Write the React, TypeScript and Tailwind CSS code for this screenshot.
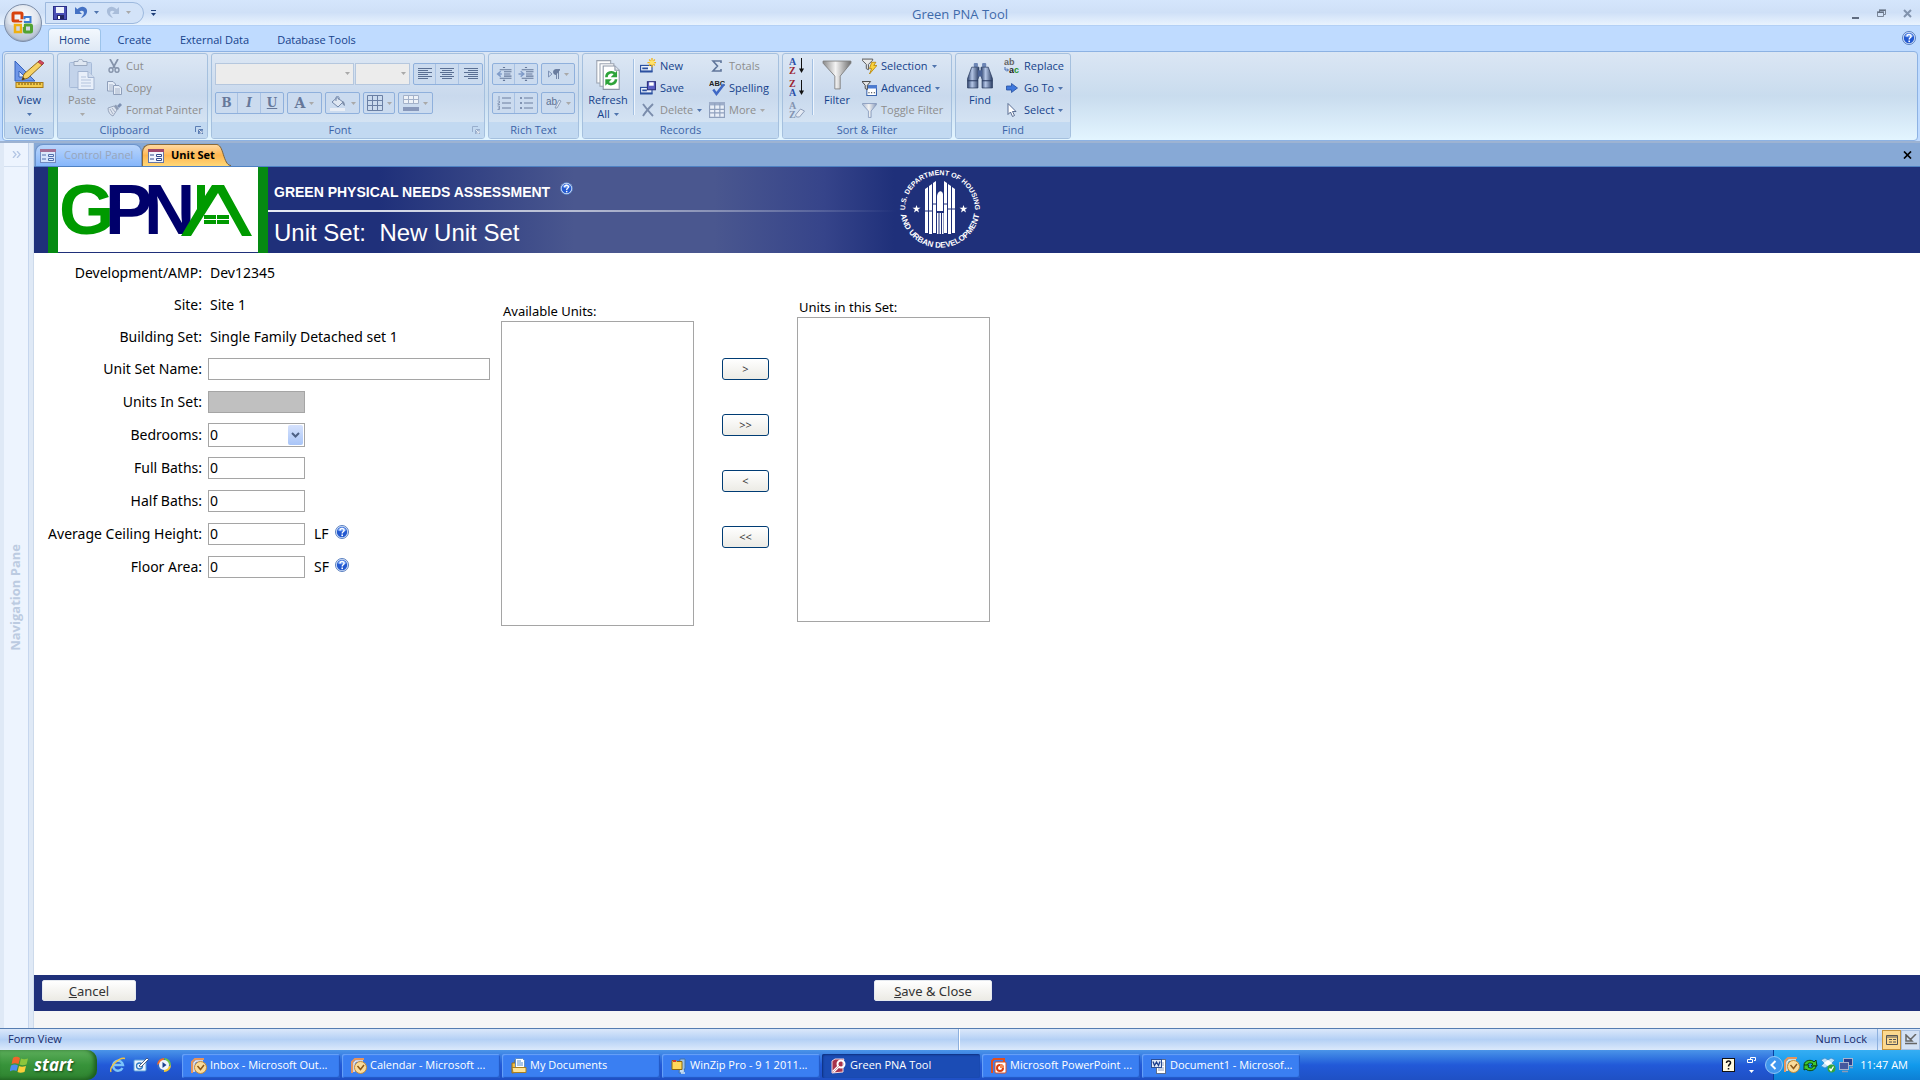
import React from "react";
import clsx from "clsx";

type IconProps = { w?: number; h?: number; box?: string; children: React.ReactNode; className?: string };

const Icon: React.FC<IconProps> = ({ w = 16, h = 16, box, children, className }) => (
  <svg width={w} height={h} viewBox={box ?? `0 0 ${w} ${h}`} className={clsx("shrink-0", className)} aria-hidden="true">
    {children}
  </svg>
);

const Arrow = ({ off = false }: { off?: boolean }) => (
  <Icon w={5} h={3}>
    <path d="M0 0h5L2.500 3z" fill={off ? "#a9a9a9" : "#4f74ad"} />
  </Icon>
);

const HelpIcon = ({ size = 14 }: { size?: number }) => (
  <svg width={size} height={size} viewBox="0 0 14 14" className="block" aria-hidden="true">
    <circle cx="7" cy="7" r="6.500" fill="#dbe8fb" stroke="#4a72b8" strokeWidth="0.900" />
    <circle cx="7" cy="7" r="5.200" fill="#2359d0" />
    <path d="M2.600 5.400a4.700 4.700 0 0 1 8.800 0c-2.600 1.200-6 1.200-8.800 0z" fill="#6c9af0" />
    <path d="M5 5.600c0-2.800 4.200-2.700 4.100-.2C9 6.900 7.200 6.800 7.200 8.500" fill="none" stroke="#fff" strokeWidth="1.400" />
    <rect x="6.400" y="9.500" width="1.600" height="1.600" fill="#fff" />
  </svg>
);

/* ---------- title bar icons ---------- */

const OfficeOrb = () => (
  <Icon w={40} h={40}>
    <defs>
      <radialGradient id="orb" cx="50%" cy="35%" r="65%">
        <stop offset="0" stopColor="#ffffff" />
        <stop offset="0.600" stopColor="#dfe5ee" />
        <stop offset="1" stopColor="#98a6bc" />
      </radialGradient>
    </defs>
    <circle cx="20" cy="20" r="18.500" fill="url(#orb)" stroke="#7d8ea9" />
    <path d="M4 21a16 16 0 0 0 32 0c-9 3-23 3-32 0z" fill="#c3cddd" opacity="0.600" />
    <rect x="10" y="10" width="9" height="8" rx="1" fill="none" stroke="#d8430e" strokeWidth="3" />
    <rect x="21.500" y="14" width="6" height="5" fill="none" stroke="#3b7bd0" strokeWidth="2" />
    <rect x="12" y="22" width="6" height="7" fill="none" stroke="#f0b010" strokeWidth="2.500" />
    <rect x="21.500" y="22" width="7" height="7" rx="1" fill="none" stroke="#52a331" strokeWidth="3" />
    <path d="M16 17h8M20 17v7" stroke="#f2f4f8" strokeWidth="1.500" />
  </Icon>
);

const SaveDisk = ({ size = 14 }: { size?: number }) => (
  <Icon w={size} h={size} box="0 0 14 14">
    <rect x="0.500" y="0.500" width="13" height="13" fill="#4a4fb5" stroke="#2b2f86" />
    <rect x="3" y="1" width="8" height="6" fill="#eef3fb" />
    <rect x="4" y="9" width="7" height="4" fill="#22255f" />
    <rect x="5" y="10" width="2" height="3" fill="#fff" />
  </Icon>
);

const Undo = () => (
  <Icon w={14} h={14}>
    <path d="M1 1v7h7L5.500 5.600C8 3.500 11 5 9.500 8.500L7 12c6-2 8-8 4-10.500C8.500 0 5.500 1 3.400 3.300z" fill="#4572c4" />
  </Icon>
);

const Redo = () => (
  <Icon w={14} h={14}>
    <path d="M13 1v7H6l2.500-2.400C6 3.500 3 5 4.500 8.500L7 12C1 10-1 4 3 1.500 5.500 0 8.500 1 10.600 3.300z" fill="#a9bdda" />
  </Icon>
);

/* ---------- ribbon icons ---------- */

const ViewIcon = () => (
  <Icon w={32} h={30}>
    <path d="M2 1v20h20z" fill="#6f97e8" stroke="#3562bd" />
    <path d="M6 11v6h6z" fill="#dbe7fb" stroke="#3562bd" />
    <path d="M9 20l2-6L26 1l4 3-15 14z" fill="#f6d265" stroke="#8e6a1c" />
    <path d="M25 2l2-2 4 3-2 2z" fill="#d4485c" stroke="#8d2b3a" strokeWidth="0.700" />
    <path d="M9 20l1-3 2 2z" fill="#3c3326" />
    <rect x="3" y="22.500" width="27" height="5" fill="#f4cc4d" stroke="#a87a17" />
    <path d="M6 23v2M9 23v2M12 23v2M15 23v2M18 23v2M21 23v2M24 23v2M27 23v2" stroke="#6d4e0d" />
  </Icon>
);

const PasteIcon = () => (
  <Icon w={28} h={32}>
    <rect x="1.500" y="3.500" width="22" height="25" rx="1" fill="#c3d3ea" stroke="#a6bad8" />
    <path d="M6 2.500h4c0-3 5-3 5 0h4v4H6z" fill="#dfe7f2" stroke="#9aa9c0" />
    <path d="M10 12.500h10l6 6v12H10z" fill="#e8effa" stroke="#a3b5d2" />
    <path d="M20 12.500v6h6" fill="#d0dcee" stroke="#a3b5d2" />
    <path d="M13 18h5M13 21h10M13 24h10M13 27h10" stroke="#b3c3dd" />
  </Icon>
);

const CutIcon = () => (
  <Icon w={14} h={14}>
    <path d="M3 0l5 9M11 0L6 9" stroke="#8593aa" strokeWidth="1.700" />
    <ellipse cx="4" cy="11" rx="2" ry="2.300" fill="none" stroke="#8593aa" strokeWidth="1.400" />
    <ellipse cx="10" cy="11" rx="2" ry="2.300" fill="none" stroke="#8593aa" strokeWidth="1.400" />
  </Icon>
);

const CopyIcon = () => (
  <Icon w={15} h={14}>
    <path d="M.5.5H6L8.500 3v7h-8z" fill="#e6edf7" stroke="#8f9fba" />
    <path d="M2 4h4M2 6h4M2 8h4" stroke="#a8b5ca" />
    <path d="M6.500 4.500H12L14.500 7v6.500h-8z" fill="#e6edf7" stroke="#8f9fba" />
    <path d="M8 8h5M8 10h5M8 12h5" stroke="#a8b5ca" />
  </Icon>
);

const PainterIcon = () => (
  <Icon w={15} h={14}>
    <path d="M1 5l6-2 3 4-4 6C3 12 1 9 1 5z" fill="#dde4ef" stroke="#97a5bc" />
    <path d="M3 6l3 5M5 5l3 4" stroke="#a5b1c5" />
    <path d="M7 3l2-1.500L12 6l-2 1z" fill="#8e9cb4" />
    <path d="M10 3l3-3 2 2-3 3z" fill="#7d90b2" />
  </Icon>
);

const LauncherIcon = ({ off = false }: { off?: boolean }) => (
  <Icon w={8} h={8}>
    <path d="M.5 6V.5H6" fill="none" stroke={off ? "#98aecd" : "#5b7db3"} />
    <rect x="3" y="3" width="5" height="5" fill={off ? "#98aecd" : "#5b7db3"} />
    <path d="M3.500 3.500l3 3M7 4.500V7H4.500" stroke="#fff" fill="none" strokeWidth="0.800" />
  </Icon>
);

const AlignIcon = ({ kind }: { kind: "l" | "c" | "r" }) => (
  <Icon w={14} h={12}>
    {[0, 1, 2, 3, 4, 5].map((i) => {
      const len = i % 2 ? 10 : 14;
      const x = kind === "l" ? 0 : kind === "r" ? 14 - len : (14 - len) / 2;
      return <rect key={i} x={x} y={i * 2} width={len} height="1" fill="#5a6f93" />;
    })}
  </Icon>
);

const IndentIcon = ({ flip = false }: { flip?: boolean }) => (
  <Icon w={16} h={15} box="0 0 14 14">
    <path d="M6 .5h2M3 2.500h11M7 4.500h7M7 6.500h6M7 8.500h7M3 10.500h11M6 12.500h2" stroke="#66799b" />
    <path d={flip ? "M0 6.500h4M2 4l3 2.500L2 9" : "M1 6.500h4M4 4L1 6.500 4 9"} fill="none" stroke="#7f9bc8" strokeWidth="1.300" />
  </Icon>
);

const ListIcon = ({ dots = false }: { dots?: boolean }) => (
  <Icon w={14} h={14}>
    <path d="M5 2h9M5 7h9M5 12h9" stroke="#6c7f9f" />
    {dots ? (
      <path d="M1 1h2v2H1zM1 6h2v2H1zM1 11h2v2H1z" fill="#8193b2" />
    ) : (
      <path d="M2 0v4M.5 5h2v2h-1.500v1.500h2M.5 10h2v3.500H.5M1 12h1" fill="none" stroke="#8193b2" strokeWidth="0.900" />
    )}
  </Icon>
);

const ParagraphIcon = () => (
  <Icon w={12} h={10}>
    <path d="M.5 2v6L4 5z" fill="none" stroke="#7f93b6" />
    <path d="M8.500 10V.5M10.500 10V.5M12 .5H8a2 2 0 0 0 0 5z" stroke="#6a7d9f" fill="#6a7d9f" strokeWidth="0.900" />
  </Icon>
);

const BucketIcon = () => (
  <Icon w={17} h={15}>
    <path d="M2 6l5-4.500L13 6l-5 5z" fill="#dfe7f2" stroke="#7387a9" />
    <path d="M6 5V1.500c0-1.500 3-1.500 3 0V4" fill="none" stroke="#7387a9" />
    <path d="M12 5c2 0 3 2 3 5-2-1-3-2-3-5z" fill="#7d8ea9" />
    <rect x="0" y="12" width="15" height="3" fill="#e9eef6" />
  </Icon>
);

const GridIcon = () => (
  <Icon w={16} h={16}>
    <path d="M.5.5h15v15H.5zM.5 5.500h15M.5 10.500h15M5.500.5v15M10.500.5v15" fill="none" stroke="#6b80a5" />
  </Icon>
);

const RowColorIcon = () => (
  <Icon w={16} h={16}>
    <path d="M.5.5h15v8H.5z" fill="#eef2f8" stroke="#a3b1c9" />
    <path d="M.5 4.500h15M5.500.5v8M10.500.5v8" stroke="#a3b1c9" />
    <rect x="0" y="12" width="16" height="4" fill="#8898bb" />
  </Icon>
);

const RefreshIcon = () => (
  <Icon w={26} h={32} box="0 0 24 30">
    <path d="M1.500 1.500h13v21h-13z" fill="#fdfdfd" stroke="#9aa3b1" />
    <path d="M4.500 4.500h13v21h-13z" fill="#fdfdfd" stroke="#9aa3b1" />
    <path d="M7.500 6.500h11l4 4v18h-15z" fill="#fff" stroke="#8d97a8" />
    <path d="M18.500 6.500v4h4" fill="#dfe4eb" stroke="#8d97a8" />
    <path d="M10.500 17c0-5 6-5.500 8-3" fill="none" stroke="#2ea33a" strokeWidth="2.400" />
    <path d="M20.500 11v6h-6z" fill="#2ea33a" />
    <path d="M19.500 19c0 5-6 5.500-8 3" fill="none" stroke="#2ea33a" strokeWidth="2.400" />
    <path d="M9.500 25v-6h6z" fill="#2ea33a" />
  </Icon>
);

const NewIcon = () => (
  <Icon box="0 0 14 14">
    <rect x="0.500" y="6.500" width="10" height="5" fill="#eaf1fb" stroke="#2b50a0" />
    <path d="M0 12h11M2 9h5" stroke="#2b50a0" strokeWidth="1.500" />
    <path d="M10.500 0v8M6.500 4h8M8 1.300l5 5.200M13 1.300L8 6.500" stroke="#f2b519" strokeWidth="1.200" />
    <circle cx="10.500" cy="4" r="2" fill="#ffe36b" />
  </Icon>
);

const SaveRecordIcon = () => (
  <Icon box="0 0 14 14">
    <rect x="0.500" y="6.500" width="10" height="5" fill="#eaf1fb" stroke="#2b50a0" />
    <path d="M0 12h11M2 9h4" stroke="#2b50a0" strokeWidth="1.500" />
    <rect x="6.500" y="1.500" width="7" height="7" fill="#5b60c4" stroke="#30347f" />
    <rect x="8" y="2" width="4" height="3" fill="#fff" />
  </Icon>
);

const DeleteIcon = () => (
  <Icon w={14} h={14}>
    <path d="M2 1c3 4 6 8 10 12M12 1C8 5 5 8 2 13" stroke="#7b8dac" strokeWidth="1.900" fill="none" />
  </Icon>
);

const TotalsIcon = () => (
  <Icon w={14} h={14}>
    <path d="M11 4V2H3l4.500 5L3 12h8v-2" fill="none" stroke="#60769b" strokeWidth="1.600" />
  </Icon>
);

const SpellingIcon = () => (
  <Icon box="0 0 15 15">
    <text x="0" y="6" fontSize="7" fontWeight="700" fontFamily="Liberation Sans" fill="#222">ABC</text>
    <path d="M4 9l3 4 7-9" fill="none" stroke="#3f68c5" strokeWidth="2.300" />
  </Icon>
);

const MoreIcon = () => (
  <Icon box="0 0 14 14">
    <path d="M.5.5h13v13H.5z" fill="#e9eff8" stroke="#8fa0bd" />
    <rect x="0" y="0" width="14" height="3" fill="#9dadc9" />
    <path d="M.5 6.500h13M.5 9.500h13M5 1v12M9.500 1v12" stroke="#8fa0bd" />
  </Icon>
);

const SortIcon = ({ a, b }: { a: string; b: string }) => (
  <Icon w={16} h={18}>
    <text x="0" y="8" fontSize="10" fontWeight="700" fontFamily="Liberation Serif" fill={a === "A" ? "#2a4fa8" : "#9b2431"}>{a}</text>
    <text x="0" y="17" fontSize="10" fontWeight="700" fontFamily="Liberation Serif" fill={b === "A" ? "#2a4fa8" : "#9b2431"}>{b}</text>
    <path d="M12.500 1v13" stroke="#111" />
    <path d="M10 11.500h5L12.500 16z" fill="#111" />
  </Icon>
);

const ClearSortIcon = () => (
  <Icon w={16} h={18}>
    <text x="0" y="8" fontSize="10" fontWeight="700" fontFamily="Liberation Serif" fill="#8494b0">A</text>
    <text x="0" y="17" fontSize="10" fontWeight="700" fontFamily="Liberation Serif" fill="#8494b0">Z</text>
    <path d="M6.500 14l5-6 4 2-5 6h-3z" fill="#e4eaf3" stroke="#8f9fba" />
  </Icon>
);

const FunnelIcon = ({ size = 30, off = false }: { size?: number; off?: boolean }) => (
  <Icon w={size} h={size} box="0 0 28 28">
    <defs>
      <linearGradient id={off ? "fnOff" : "fnOn"} x1="0" x2="1">
        <stop offset="0" stopColor={off ? "#a9b8d2" : "#8b8b8b"} />
        <stop offset="0.450" stopColor="#f4f4f4" />
        <stop offset="1" stopColor={off ? "#8699bb" : "#6f6f6f"} />
      </linearGradient>
    </defs>
    <path
      d="M1 1h26v2L17 15v12h-5V15L1 3z"
      fill={off ? "url(#fnOff)" : "url(#fnOn)"}
      stroke={off ? "#8699bb" : "#7c7c7c"}
      strokeWidth={off ? 1.6 : 0.8}
    />
  </Icon>
);

const SelectionIcon = () => (
  <Icon w={15} h={16} box="0 0 14 15">
    <path d="M0 1h10v1L6 6v5L4 10V6L0 2z" fill="#e8e8e8" stroke="#555" strokeWidth="0.900" />
    <path d="M9 4h4l-2 3h3l-7 8 2-5H7z" fill="#fbd33c" stroke="#b8860b" strokeWidth="0.800" />
  </Icon>
);

const AdvancedIcon = () => (
  <Icon w={15} h={15} box="0 0 14 14">
    <path d="M4.500 4.500h9v9h-9z" fill="#fff" stroke="#3b64ad" />
    <rect x="4" y="4" width="10" height="3" fill="#4b7bd1" />
    <path d="M6 11h1M8.500 11h1M11 11h1" stroke="#222" />
    <path d="M0 .5h8L5 4v4L3 7V4z" fill="#e8e8e8" stroke="#444" strokeWidth="0.900" />
  </Icon>
);

const BinocularsIcon = () => (
  <Icon w={28} h={27} box="0 0 26 26">
    <defs>
      <linearGradient id="bino" x1="0" x2="1">
        <stop offset="0" stopColor="#2f456f" />
        <stop offset="0.400" stopColor="#b4c6e6" />
        <stop offset="1" stopColor="#2a3d63" />
      </linearGradient>
    </defs>
    <rect x="7" y="1" width="4" height="4" rx="1" fill="#6d86b5" />
    <rect x="15" y="1" width="4" height="4" rx="1" fill="#6d86b5" />
    <path d="M5 5h7v8l-1 4v8H1v-9z" fill="url(#bino)" stroke="#2b3d61" strokeWidth="0.700" />
    <path d="M14 5h7l4 11v9H15v-8l-1-4z" fill="url(#bino)" stroke="#2b3d61" strokeWidth="0.700" />
    <rect x="11" y="8" width="4" height="6" fill="#4a6294" />
    <path d="M1 18h10M15 18h10" stroke="#2b3d61" />
  </Icon>
);

const ReplaceIcon = () => (
  <Icon w={16} h={16}>
    <text x="0" y="7" fontSize="9" fontWeight="700" fontFamily="Liberation Sans" fill="#666">ab</text>
    <text x="5" y="15" fontSize="9" fontWeight="700" fontFamily="Liberation Sans" fill="#222">a<tspan fill="#23952b">c</tspan></text>
    <path d="M1 9v3h3M3 10.500L4.500 12 3 13.500" fill="none" stroke="#456bb0" />
  </Icon>
);

const GoToIcon = () => (
  <Icon w={12} h={10}>
    <path d="M.5 3h5V.5L11.500 5 5.500 9.500V7h-5z" fill="#3f78dd" stroke="#234f9f" strokeWidth="0.800" />
  </Icon>
);

const CursorIcon = () => (
  <Icon w={10} h={14}>
    <path d="M1 .5v11l2.500-2.500 2 4.500 2-1-2-4H9z" fill="#fff" stroke="#4a5f86" strokeWidth="0.900" />
  </Icon>
);

/* ---------- ribbon pieces ---------- */

const Group: React.FC<{ title: string; width: string; launcher?: "on" | "off"; children: React.ReactNode }> = ({
  title,
  width,
  launcher,
  children,
}) => (
  <section
    aria-label={title}
    className={clsx(
      "flex shrink-0 flex-col overflow-hidden rounded-[3px] border border-[#a5c0de] bg-gradient-to-b from-[#dce7f4] via-[#c9d9ed] to-[#dbe9f6]",
      width
    )}
  >
    <div className="flex h-[68px] pt-px">{children}</div>
    <div className="flex h-4 items-center bg-[#c2d9f1] leading-4 text-[#3d64a8]">
      <span className="flex-1 text-center">{title}</span>
      {launcher && (
        <button aria-label={`${title} options`} className="mr-1 ml-1">
          <LauncherIcon off={launcher === "off"} />
        </button>
      )}
    </div>
  </section>
);

const Big: React.FC<{ icon: React.ReactNode; label: string; second?: React.ReactNode; off?: boolean; width: string }> = ({
  icon,
  label,
  second,
  off,
  width,
}) => (
  <button
    disabled={off}
    className={clsx("flex shrink-0 flex-col items-center pt-1", width, off ? "text-[#8d8d8d]" : "text-[#15428b]")}
  >
    <span className="flex h-8 items-center justify-center">{icon}</span>
    <span className="leading-[18px]">{label}</span>
    <span className="flex h-2.5 items-center gap-1 leading-[10px]">{second}</span>
  </button>
);

const Small: React.FC<{ icon: React.ReactNode; label: string; off?: boolean; arrow?: boolean; arrowOn?: boolean }> = ({
  icon,
  label,
  off,
  arrow,
  arrowOn,
}) => (
  <button
    disabled={off}
    className={clsx("flex h-[22px] items-center gap-1 whitespace-nowrap", off ? "text-[#8d8d8d]" : "text-[#15428b]")}
  >
    <span className="flex w-4 justify-center">{icon}</span>
    {label}
    {arrow && <Arrow off={off && !arrowOn} />}
  </button>
);

const Divider = () => <div className="mt-1 h-14 w-px bg-[#a3c0e2] shadow-[1px_0_0_#eef5fd]" />;

const Seg: React.FC<{ children: React.ReactNode }> = ({ children }) => (
  <div className="flex h-[22px] divide-x divide-[#a9c2e3] rounded-[2px] border border-[#8fb0dc] bg-[#cbdbef]">{children}</div>
);

const SegBtn: React.FC<{ label: string; width: string; children: React.ReactNode; arrow?: boolean }> = ({
  label,
  width,
  children,
  arrow,
}) => (
  <button disabled aria-label={label} className={clsx("flex items-center justify-center gap-1 text-[#66789a]", width)}>
    {children}
    {arrow && <Arrow off />}
  </button>
);

const serif = "font-['DejaVu_Serif',serif] text-xs font-bold";

const RibbonCombo = ({ label, width }: { label: string; width: string }) => (
  <div className={clsx("relative h-[22px]", width)}>
    <select disabled aria-label={label} className="h-full w-full appearance-none border border-[#b5c7de] bg-[#ececec]" />
    <span className="absolute top-[9px] right-1">
      <Arrow off />
    </span>
  </div>
);

const Ribbon = () => (
  <div className="mx-0.5 flex gap-[3px] rounded-[4px] border border-[#8db2e3] bg-gradient-to-b from-[#dbe6f4] via-[#c9dcee] to-[#e3f5ff] p-px text-[11px]">
    <Group title="Views" width="w-[50px]">
      <Big width="w-full" icon={<ViewIcon />} label="View" second={<Arrow />} />
    </Group>
    <Group title="Clipboard" width="w-[151px]" launcher="on">
      <Big width="w-12" off icon={<PasteIcon />} label="Paste" second={<Arrow off />} />
      <div className="flex flex-col">
        <Small off icon={<CutIcon />} label="Cut" />
        <Small off icon={<CopyIcon />} label="Copy" />
        <Small off icon={<PainterIcon />} label="Format Painter" />
      </div>
    </Group>
    <Group title="Font" width="w-[274px]" launcher="off">
      <div className="flex flex-col gap-[7px] px-[3px] pt-2">
        <div className="flex gap-px">
          <RibbonCombo label="Font name" width="w-[139px]" />
          <RibbonCombo label="Font size" width="w-[55px]" />
          <div className="ml-0.5">
            <Seg>
              <SegBtn label="Align left" width="w-[22px]"><AlignIcon kind="l" /></SegBtn>
              <SegBtn label="Center" width="w-[23px]"><AlignIcon kind="c" /></SegBtn>
              <SegBtn label="Align right" width="w-[23px]"><AlignIcon kind="r" /></SegBtn>
            </Seg>
          </div>
        </div>
        <div className="flex gap-[3px]">
          <Seg>
            <SegBtn label="Bold" width="w-[22px]"><span className={serif}>B</span></SegBtn>
            <SegBtn label="Italic" width="w-[23px]"><span className={clsx(serif, "italic")}>I</span></SegBtn>
            <SegBtn label="Underline" width="w-[22px]"><span className={clsx(serif, "underline")}>U</span></SegBtn>
          </Seg>
          <Seg>
            <SegBtn label="Font color" width="w-[33px]" arrow><span className="font-['DejaVu_Serif',serif] text-sm font-bold">A</span></SegBtn>
          </Seg>
          <Seg>
            <SegBtn label="Fill color" width="w-[33px]" arrow><BucketIcon /></SegBtn>
          </Seg>
          <Seg>
            <SegBtn label="Gridlines" width="w-[30px]" arrow><GridIcon /></SegBtn>
          </Seg>
          <Seg>
            <SegBtn label="Alternate row color" width="w-[33px]" arrow><RowColorIcon /></SegBtn>
          </Seg>
        </div>
      </div>
    </Group>
    <Group title="Rich Text" width="w-[91px]">
      <div className="flex flex-col gap-[7px] px-[3px] pt-2">
        <div className="flex gap-[3px]">
          <Seg>
            <SegBtn label="Decrease indent" width="w-[22px]"><IndentIcon /></SegBtn>
            <SegBtn label="Increase indent" width="w-[22px]"><IndentIcon flip /></SegBtn>
          </Seg>
          <Seg>
            <SegBtn label="Text direction" width="w-[32px]" arrow><ParagraphIcon /></SegBtn>
          </Seg>
        </div>
        <div className="flex gap-[3px]">
          <Seg>
            <SegBtn label="Numbering" width="w-[22px]"><ListIcon /></SegBtn>
            <SegBtn label="Bullets" width="w-[22px]"><ListIcon dots /></SegBtn>
          </Seg>
          <Seg>
            <SegBtn label="Highlight" width="w-[32px]" arrow>
              <Icon w={16} h={12}>
                <text x="0" y="8" fontSize="10" fontFamily="Liberation Sans" fill="#5d7092">ab</text>
                <path d="M9 11l4-8 2 1-4 7z" fill="#e4eaf3" stroke="#7f90ae" strokeWidth="0.800" />
              </Icon>
            </SegBtn>
          </Seg>
        </div>
      </div>
    </Group>
    <Group title="Records" width="w-[197px]">
      <Big width="w-[50px]" icon={<RefreshIcon />} label="Refresh" second={<>All <Arrow /></>} />
      <Divider />
      <div className="flex w-[70px] shrink-0 flex-col pl-[6px]">
        <Small icon={<NewIcon />} label="New" />
        <Small icon={<SaveRecordIcon />} label="Save" />
        <Small off arrow arrowOn icon={<DeleteIcon />} label="Delete" />
      </div>
      <div className="flex flex-col pl-[5px]">
        <Small off icon={<TotalsIcon />} label="Totals" />
        <Small icon={<SpellingIcon />} label="Spelling" />
        <Small off arrow icon={<MoreIcon />} label="More" />
      </div>
    </Group>
    <Group title="Sort & Filter" width="w-[170px]">
      <div className="flex w-[29px] shrink-0 flex-col pl-[6px]">
        <button aria-label="Sort ascending" className="flex h-[22px] items-center"><SortIcon a="A" b="Z" /></button>
        <button aria-label="Sort descending" className="flex h-[22px] items-center"><SortIcon a="Z" b="A" /></button>
        <button aria-label="Clear sorts" disabled className="flex h-[22px] items-center"><ClearSortIcon /></button>
      </div>
      <Divider />
      <Big width="w-12" icon={<FunnelIcon />} label="Filter" />
      <div className="flex flex-col">
        <Small arrow icon={<SelectionIcon />} label="Selection" />
        <Small arrow icon={<AdvancedIcon />} label="Advanced" />
        <Small off icon={<FunnelIcon size={15} off />} label="Toggle Filter" />
      </div>
    </Group>
    <Group title="Find" width="w-[116px]">
      <Big width="w-12" icon={<BinocularsIcon />} label="Find" />
      <div className="flex flex-col">
        <Small icon={<ReplaceIcon />} label="Replace" />
        <Small arrow icon={<GoToIcon />} label="Go To" />
        <Small arrow icon={<CursorIcon />} label="Select" />
      </div>
    </Group>
  </div>
);

/* ---------- top of window ---------- */

const TitleBar = () => (
  <header className="relative">
    <div className="flex h-[26px] items-center border-b border-[#b3d0f5] bg-gradient-to-b from-[#d5e6fc] via-[#cfe0f7] to-[#e9f3fe]">
      <div className="ml-[45px] flex h-[22px] w-[99px] items-center gap-[7px] rounded-r-full border border-[#9db9de] bg-[#d3e3f8] pl-[7px]">
        <button aria-label="Save"><SaveDisk /></button>
        <button aria-label="Undo" className="flex items-center gap-1.5"><Undo /><Arrow /></button>
        <button aria-label="Redo" disabled className="flex items-center gap-1.5"><Redo /><Arrow off /></button>
      </div>
      <button aria-label="Customize toolbar" className="ml-[7px]">
        <Icon w={5} h={6}>
          <path d="M0 .5h5" stroke="#1e3e78" />
          <path d="M0 3h5L2.500 6z" fill="#1e3e78" />
        </Icon>
      </button>
      <h1 className="flex-1 pt-1 pr-[88px] text-center text-[13px] text-[#3e6aaa]">Green PNA Tool</h1>
      <div className="flex w-[68px] items-center gap-[17px] pt-0.5">
        <button aria-label="Minimize"><Icon w={8} h={12}><path d="M0 10h7" stroke="#606c80" strokeWidth="2" /></Icon></button>
        <button aria-label="Restore">
          <Icon w={9} h={10}>
            <path d="M2.500 3V1.500h6v4H7M.5 3.500h6v4h-6z" fill="none" stroke="#7a8698" />
            <path d="M2 1h7M0 3h7" stroke="#4f5b6d" />
          </Icon>
        </button>
        <button aria-label="Close"><Icon w={9} h={9}><path d="M1 1l7 7M8 1L1 8" stroke="#8193ad" strokeWidth="2" /></Icon></button>
      </div>
    </div>
    <nav className="flex h-[25px] items-end bg-[#bfdbff] pr-1 pl-12 text-[11px] text-[#15428b]">
      <button className="h-[23px] w-[53px] rounded-t-[4px] border border-b-0 border-[#9cc3ea] bg-gradient-to-b from-[#f3f8fe] to-[#dfe9f5]">Home</button>
      <button className="h-[23px] w-[67px] pt-px">Create</button>
      <button className="h-[23px] w-[93px] pt-px">External Data</button>
      <button className="h-[23px] w-[111px] pt-px">Database Tools</button>
      <button aria-label="Help" className="mb-1.5 ml-auto"><HelpIcon /></button>
    </nav>
    <button aria-label="Office" className="absolute top-[3px] left-[3px]"><OfficeOrb /></button>
  </header>
);

const FormIcon = () => (
  <Icon w={16} h={14}>
    <rect x="0.500" y="0.500" width="15" height="13" fill="#f3f6fc" stroke="#6576a8" />
    <rect x="0" y="0" width="16" height="3" fill="#a0476a" />
    <path d="M2 6h4M2 10h4" stroke="#334a8c" />
    <path d="M8.500 5.500h5v2h-5zM8.500 9.500h5v2h-5z" fill="#fff" stroke="#334a8c" />
  </Icon>
);

const DocTabs = () => (
  <div className="flex h-6 items-end border-b border-[#4f82c4] bg-[#87a9d6] pl-px text-[11px]">
    <button className="flex h-[22px] w-[107px] items-center gap-2 rounded-t-[8px] border border-b-0 border-[#6d94cc] bg-gradient-to-b from-[#b9d5fb] to-[#86b6fb] pl-1 text-[#98a5ba]">
      <span className="opacity-70"><FormIcon /></span>
      Control Panel
    </button>
    <button className="flex h-[22px] w-[75px] items-center gap-[7px] rounded-tl-[8px] border-t border-l border-[#8a6a3a] bg-gradient-to-b from-[#ffd9a0] via-[#ffb650] to-[#ffd877] pl-[5px] font-bold whitespace-nowrap text-black">
      <FormIcon />
      Unit Set
    </button>
    <Icon w={14} h={22}>
      <defs>
        <linearGradient id="tabEnd" x1="0" x2="0" y1="0" y2="1">
          <stop offset="0" stopColor="#ffd9a0" />
          <stop offset="0.500" stopColor="#ffb650" />
          <stop offset="1" stopColor="#ffd877" />
        </linearGradient>
      </defs>
      <path d="M0 .5c4 1 5 6 7 12 2 6 4 9.500 7 9.500H0z" fill="url(#tabEnd)" />
      <path d="M0 .5c4 1 5 6 7 12 2 6 4 9 7 9" fill="none" stroke="#7d6238" />
    </Icon>
    <button aria-label="Close form" className="mr-[8px] mb-[7px] ml-auto">
      <Icon w={9} h={8}><path d="M1 .5l7 7M8 .5l-7 7" stroke="#000" strokeWidth="1.700" /></Icon>
    </button>
  </div>
);

/* ---------- banner ---------- */

const GpnaLogo = () => (
  <svg width="200" height="85" viewBox="0 0 200 85" role="img" aria-label="GPNA" className="block bg-white">
    <g fontFamily="Liberation Sans, sans-serif" fontWeight="700" fontSize="71">
      <text x="1" y="67" fill="#009a00">G</text>
      <text x="47" y="67" fill="#00006b">P</text>
      <text x="86" y="67" fill="#00006b">N</text>
    </g>
    <path d="M139 18h8v11l7-11h12l28 51h-10L160 26l-27 43h-10l16-27z" fill="#009a00" />
    <path d="M146 48h12v4h-12zM159 48h12v4h-12zM146 53h12v4h-12zM159 53h12v4h-12z" fill="#009a00" />
  </svg>
);

const star = "M0-4L1 -1.200H4L1.600.5 2.500 3.500 0 1.700-2.500 3.500-1.600.5-4-1.200H-1z";

const HudSeal = () => (
  <svg width="86" height="86" viewBox="-43 -42 86 86" role="img" aria-label="U.S. Department of Housing and Urban Development">
    <defs>
      <path id="sealTop" d="M-35 1A35 35 0 1 1 35 1" />
      <path id="sealBottom" d="M-39.500 5A40 40 0 0 0 39.500 5" />
    </defs>
    <g fill="#fff" fontFamily="Liberation Sans, sans-serif" fontSize="7" fontWeight="700">
      <text><textPath href="#sealTop" startOffset="50%" textAnchor="middle">U.S. DEPARTMENT OF HOUSING</textPath></text>
      <text fontSize="8"><textPath href="#sealBottom" startOffset="50%" textAnchor="middle">AND URBAN DEVELOPMENT</textPath></text>
      <path d={star} transform="translate(-23.500 0)" />
      <path d={star} transform="translate(23.500 0)" />
      <path d="M-15-20l3-2v46h-3zM-11-23l3-2v50h-3zM-7-26l3-2v52h-3zM4-28l3 2v50H4zM8-25l3 2v48H8zM12-22l3 2v44h-3z" />
      <path d="M-3-12c0-6 5-8 6-3V2h-6zM-3 4h1.500v21H-3zM-.5 4H1v21H-.5zM2 4h1.500v21H2z" />
    </g>
    <path d="M-15 2h8M-7-5h4M4-5h4M8 0h7" stroke="#1f2f7a" />
  </svg>
);

const Banner = () => (
  <div className="flex h-[86px] bg-[#1f307a] bg-[linear-gradient(90deg,#1f307a_0px,#1f307a_345px,#4a578f_540px,#4a578f_680px,#36448a_790px,#1f307a_860px)] pl-[14px]">
    <div className="flex shrink-0 border-x-[10px] border-[#058a12]"><GpnaLogo /></div>
    <div className="flex w-[629px] flex-col font-['Liberation_Sans',Arial,sans-serif] text-white">
      <div className="flex h-[43px] items-center gap-2.5 pl-1.5">
        <h2 className="pt-2 text-[14px] font-bold">GREEN PHYSICAL NEEDS ASSESSMENT</h2>
        <button aria-label="Help"><HelpIcon size={13} /></button>
      </div>
      <div className="h-0.5 bg-gradient-to-r from-[#e8ecf5] via-[#b5bbd2] to-transparent" />
      <p className="pt-px pl-1.5 text-[24px] leading-10 whitespace-pre">Unit Set:  New Unit Set</p>
    </div>
    <HudSeal />
  </div>
);

/* ---------- form ---------- */

const statics = [
  { label: "Development/AMP:", value: "Dev12345" },
  { label: "Site:", value: "Site 1" },
  { label: "Building Set:", value: "Single Family Detached set 1" },
];

const fields: { id: string; label: string; kind: "wide" | "gray" | "combo" | "num"; unit?: string }[] = [
  { id: "name", label: "Unit Set Name:", kind: "wide" },
  { id: "count", label: "Units In Set:", kind: "gray" },
  { id: "bedrooms", label: "Bedrooms:", kind: "combo" },
  { id: "full", label: "Full Baths:", kind: "num" },
  { id: "half", label: "Half Baths:", kind: "num" },
  { id: "ceiling", label: "Average Ceiling Height:", kind: "num", unit: "LF" },
  { id: "floor", label: "Floor Area:", kind: "num", unit: "SF" },
];

const UnitForm = () => (
  <form className="w-[456px] pt-[3px] font-['Noto_Sans','Trebuchet_MS',sans-serif] text-[14px] text-black">
    {statics.map((s) => (
      <div key={s.label} className="flex h-8 items-center gap-2">
        <span className="w-[168px] text-right">{s.label}</span>
        <span>{s.value}</span>
      </div>
    ))}
    {fields.map((f) => (
      <div key={f.id} className="flex h-[33px] items-center gap-1.5">
        <label htmlFor={f.id} className="w-[168px] shrink-0 text-right whitespace-nowrap">{f.label}</label>
        {f.kind === "combo" ? (
          <div className="relative h-6 w-[97px]">
            <select id={f.id} className="h-full w-full appearance-none border border-[#a5a5a5] bg-white pl-px">
              <option>0</option>
            </select>
            <span className="pointer-events-none absolute top-0.5 right-0.5 flex h-5 w-[15px] items-center justify-center rounded-[2px] bg-gradient-to-b from-[#d6e2fd] to-[#a9c5f7]">
              <Icon w={9} h={6}><path d="M1 1l3.500 3.500L8 1" fill="none" stroke="#4d6185" strokeWidth="2" /></Icon>
            </span>
          </div>
        ) : (
          <input
            id={f.id}
            type="text"
            disabled={f.kind === "gray"}
            defaultValue={f.kind === "num" ? "0" : ""}
            className={clsx(
              "h-[22px] border border-[#a5a5a5] pl-px",
              f.kind === "wide" ? "w-full" : "w-[97px]",
              f.kind === "gray" ? "bg-[#c0c0c0]" : "bg-white"
            )}
          />
        )}
        {f.unit && (
          <span className="flex items-center gap-1.5 pl-[3px]">
            {f.unit}
            <button type="button" aria-label={`${f.label} help`} className="mb-1"><HelpIcon /></button>
          </span>
        )}
      </div>
    ))}
  </form>
);

const UnitList = ({ id, label, top }: { id: string; label: string; top: string }) => (
  <div className={clsx("flex w-[193px] flex-col", top)}>
    <label htmlFor={id} className="pl-0.5 font-['Noto_Sans',Calibri,sans-serif] text-[13px] leading-5 text-black">{label}</label>
    <select id={id} multiple className="h-[305px] w-full border border-[#a5a5a5] bg-white" />
  </div>
);

const moves = [
  { text: ">", name: "Add" },
  { text: ">>", name: "Add all" },
  { text: "<", name: "Remove" },
  { text: "<<", name: "Remove all" },
];

const NavPane = () => (
  <aside className="flex w-[34px] shrink-0 border-r border-[#cddaeb] bg-[#dfe9f6] pl-1">
    <div className="flex w-[25px] flex-col items-center border-r border-[#c6d6ee] bg-[#edf4fe]">
      <button aria-label="Open navigation" className="flex h-6 w-full items-center justify-center border-b border-[#d3dfef]">
        <Icon w={9} h={7}><path d="M1 0l3 3.500L1 7M5 0l3 3.500L5 7" fill="none" stroke="#b3c6e4" strokeWidth="1.300" /></Icon>
      </button>
      <div className="flex flex-1 items-center">
        <span className="rotate-180 text-[13px] font-bold text-[#bccbe1] [writing-mode:vertical-rl]">Navigation Pane</span>
      </div>
    </div>
  </aside>
);

const footerBtn =
  "h-[21px] rounded-[2px] border border-[#e5e9ef] bg-gradient-to-b from-white to-[#ecebe5] font-['Noto_Sans',Calibri,sans-serif] text-[13px] leading-[18px] text-[#333]";

/* ---------- taskbar ---------- */

const OutlookIcon = () => (
  <Icon w={16} h={16}>
    <path d="M1 15V4l3-3h9" fill="none" stroke="#e5945c" strokeWidth="2" />
    <path d="M3 14V5l2-2h7" fill="none" stroke="#fff0dc" strokeWidth="1.500" />
    <circle cx="9.500" cy="9.500" r="6" fill="#f9dc9c" stroke="#c58b35" />
    <path d="M6.500 8l3 3.500L13 7" fill="none" stroke="#8e5a1b" strokeWidth="1.500" />
  </Icon>
);

const FolderDocIcon = () => (
  <Icon w={16} h={16}>
    <path d="M1 15V5h3V2h3v12z" fill="#f1bd45" stroke="#9b7013" />
    <path d="M4.500.5h7l2 2v8h-9z" fill="#fff" stroke="#5f8fc6" />
    <path d="M6 3h4M6 5h6M6 7h6" stroke="#4d8ad2" />
    <path d="M1 9.500h14v5H2z" fill="#ffe395" stroke="#a97f1f" />
  </Icon>
);

const ZipIcon = () => (
  <Icon w={16} h={16}>
    <path d="M9 1h5v9l-2 5H8z" fill="#9fc3e8" stroke="#4474a5" />
    <path d="M1 2.500h4l1 1h5v8H1z" fill="#ffd95a" stroke="#8f6a0c" />
    <rect x="2" y="2" width="3" height="2" fill="#d43a2f" />
    <path d="M9 13h4M10 15h4" stroke="#cfe3f7" strokeWidth="1.500" />
  </Icon>
);

const AccessIcon = () => (
  <Icon w={16} h={16}>
    <path d="M1 15V3l3-2h9l-1 2v11z" fill="#a8344c" stroke="#f3d9df" />
    <circle cx="10" cy="6" r="3.500" fill="none" stroke="#fff" strokeWidth="2" />
    <path d="M8 8l-6 6" stroke="#fff" strokeWidth="2.500" />
    <path d="M8 8l-6 6" stroke="#d9a6b0" />
  </Icon>
);

const PowerPointIcon = () => (
  <Icon w={16} h={16}>
    <path d="M1 15V3l2-2h10v5" fill="none" stroke="#e0501f" strokeWidth="2" />
    <rect x="4" y="4" width="11" height="11" rx="1" fill="#fff" stroke="#e0501f" />
    <circle cx="9" cy="10" r="3" fill="none" stroke="#d93f12" strokeWidth="2" />
    <path d="M9 10V6a4 4 0 0 1 4 4z" fill="#f68b55" />
  </Icon>
);

const WordIcon = () => (
  <Icon w={16} h={16}>
    <rect x="5.500" y="1.500" width="9" height="14" fill="#fff" stroke="#5d6d8a" />
    <path d="M7 10h6M7 12h6M11 5h2M11 7h2" stroke="#8a9cc0" />
    <rect x="0.500" y="1.500" width="10" height="8" fill="#dfe8f7" stroke="#2d4f94" />
    <path d="M2 3.500l1.500 4L5.500 4l2 3.500L9 3.500" fill="none" stroke="#1d3f8e" strokeWidth="1.300" />
  </Icon>
);

const tasks = [
  { icon: <OutlookIcon />, text: "Inbox - Microsoft Out..." },
  { icon: <OutlookIcon />, text: "Calendar - Microsoft ..." },
  { icon: <FolderDocIcon />, text: "My Documents" },
  { icon: <ZipIcon />, text: "WinZip Pro - 9 1 2011..." },
  { icon: <AccessIcon />, text: "Green PNA Tool", active: true },
  { icon: <PowerPointIcon />, text: "Microsoft PowerPoint ..." },
  { icon: <WordIcon />, text: "Document1 - Microsof..." },
];

const Taskbar = () => (
  <footer className="flex h-[30px] bg-gradient-to-b from-[#4b94e8] via-[#2259d8] to-[#1f50c4] text-[11px] text-white">
    <button className="flex w-[97px] shrink-0 items-center gap-1 rounded-r-[10px] bg-gradient-to-b from-[#5cae5b] via-[#37933a] to-[#2f8330] pl-2.5 shadow-[inset_-3px_-1px_4px_#1c5c1e]">
      <Icon w={20} h={18}>
        <path d="M3 2c3-2 5-1 7 0L8.500 8C6 7 4 7 1.500 8z" fill="#f0652c" />
        <path d="M11 2.500c2 1 4 1 7 0L16.500 8.500c-3 1-5 1-7 0z" fill="#8cc63c" />
        <path d="M1 9.500c3-1.500 5-1 7 0L6.500 15c-2-1-4-1-7 .5z" fill="#4c8df0" />
        <path d="M9 10c2 1 4 1 7 0l-1.500 6c-3 1-5 1-7 0z" fill="#fbcf3b" />
      </Icon>
      <span className="text-[17px] leading-5 font-bold italic [text-shadow:1px_1px_2px_#174a18]">start</span>
    </button>
    <div className="flex w-[85px] shrink-0 items-center gap-[7px] pl-[13px]">
      <button aria-label="Internet Explorer">
        <Icon w={16} h={16}>
          <path d="M12.500 11a5 5 0 1 1 .5-3H4" fill="none" stroke="#7cc4fb" strokeWidth="2.400" />
          <path d="M1 15C-1 10 9 0 15 1.500" fill="none" stroke="#f3c440" strokeWidth="1.400" />
        </Icon>
      </button>
      <button aria-label="Show desktop">
        <Icon w={16} h={16}>
          <rect x="1" y="3" width="12" height="11" rx="1" fill="#e9f3fc" stroke="#5aa0dc" />
          <circle cx="6.500" cy="9" r="3" fill="none" stroke="#2f7ec9" strokeWidth="1.300" />
          <path d="M6 9l8-8 1.500 1.500L8 10z" fill="#fff" stroke="#2b3f66" strokeWidth="0.800" />
        </Icon>
      </button>
      <button aria-label="Media Player">
        <Icon w={16} h={16}>
          <circle cx="8" cy="8" r="7" fill="#2d67c8" />
          <path d="M8 1a7 7 0 0 1 7 7h-3z" fill="#6ac24a" />
          <path d="M1 8a7 7 0 0 1 7-7v3z" fill="#ee6b2d" />
          <path d="M15 8a7 7 0 0 1-7 7v-3z" fill="#f5c732" />
          <circle cx="8" cy="8" r="5" fill="#f2f6fc" />
          <path d="M6.500 5l4 3-4 3z" fill="#1d438f" />
        </Icon>
      </button>
    </div>
    <div className="flex flex-1 items-center gap-0.5 pt-px">
      {tasks.map((t) => (
        <button
          key={t.text}
          className={clsx(
            "flex h-6 w-[158px] items-center gap-[3px] rounded-[2px] pl-[9px] whitespace-nowrap",
            t.active
              ? "bg-[#1b4cb5] shadow-[inset_1px_1px_2px_#0d2f7d]"
              : "bg-[#3a7ff2] shadow-[inset_1px_1px_1px_#6ba4f8,inset_-1px_-1px_1px_#2258c5]"
          )}
        >
          {t.icon}
          {t.text}
        </button>
      ))}
    </div>
    <div className="flex items-center gap-3 pr-[17px]">
      <button aria-label="Input help">
        <Icon w={13} h={14}>
          <rect x="0.500" y="0.500" width="12" height="13" fill="#fffbe0" stroke="#111" />
          <path d="M4.500 5c0-3 4.500-2.500 4 0-.3 1.500-2 1.500-2 3.500M6.500 10v1.500" fill="none" stroke="#111" strokeWidth="1.500" />
        </Icon>
      </button>
      <button aria-label="Language bar options">
        <Icon w={9} h={18}>
          <path d="M3.500 3V1.500h5v3H7M.5 3.500h5v3h-5z" fill="none" stroke="#fff" />
          <path d="M2 14h5l-2.500 3z" fill="#fff" />
        </Icon>
      </button>
    </div>
    <div className="relative flex shrink-0 items-center gap-0.5 border-l border-[#0b3f9e] bg-gradient-to-b from-[#35aef3] via-[#119aec] to-[#0d7fd4] pr-3 pl-2.5">
      <button aria-label="Show hidden icons" className="absolute top-1.5 -left-[9px]">
        <Icon w={18} h={18}>
          <circle cx="9" cy="9" r="8.500" fill="#3f96ee" stroke="#a8d4fa" strokeWidth="0.800" />
          <path d="M10.500 5L6.500 9l4 4" fill="none" stroke="#fff" strokeWidth="2" />
        </Icon>
      </button>
      <OutlookIcon />
      <Icon w={16} h={16}>
        <path d="M2 8c0-5 8-6 10-3l2-2 1 6H9l2-2C8 5 5 6 5 9z" fill="#3fc72d" stroke="#0b3a08" strokeWidth="0.900" />
        <path d="M14 9c0 5-8 6-10 3l-2 1V8h5l-1 2c3 2 5 1 5-1z" fill="#3fc72d" stroke="#0b3a08" strokeWidth="0.900" />
      </Icon>
      <Icon w={16} h={16}>
        <path d="M1 3l4-2 3 2 3-2 4 2-3 3 3 3-4 2-3-2-3 2-4-2 3-3z" fill="#bfe2fb" stroke="#3985c4" strokeWidth="0.700" />
        <path d="M4 6l4-3 4 3-4 3z" fill="#fff" />
        <circle cx="11.500" cy="11.500" r="4" fill="#34a53a" />
        <path d="M9.500 11.500l1.500 2 2.500-4" fill="none" stroke="#fff" strokeWidth="1.300" />
      </Icon>
      <Icon w={16} h={16}>
        <rect x="5.500" y="1.500" width="9" height="7" fill="#2b3f8f" stroke="#a8b3cc" />
        <rect x="1.500" y="5.500" width="9" height="7" fill="#46589e" stroke="#a8b3cc" />
        <path d="M4 14.500h6M12 10.500h3" stroke="#8d99b5" strokeWidth="1.500" />
      </Icon>
      <time className="pl-1">11:47 AM</time>
    </div>
  </footer>
);

const App: React.FC = () => (
  <div className="flex min-h-screen flex-col bg-[#bfdbff] font-['Open_Sans','Noto_Sans',sans-serif]">
    <TitleBar />
    <Ribbon />
    <div className="h-0.5 bg-[#9db3d2]" />

    <div className="flex flex-1">
      <NavPane />
      <div className="flex min-w-0 flex-1 flex-col">
        <DocTabs />
        <Banner />
        <main className="flex flex-1 items-start bg-white">
          <UnitForm />
          <div className="flex pl-[11px]">
            <UnitList id="available" label="Available Units:" top="mt-12" />
            <div className="mx-7 mt-[105px] flex flex-col gap-[34px]">
              {moves.map((m) => (
                <button
                  key={m.name}
                  aria-label={m.name}
                  className="h-[22px] w-[47px] rounded-[3px] border border-[#003c74] bg-gradient-to-b from-white to-[#ecebe5] text-[11px] leading-5 text-[#333]"
                >
                  {m.text}
                </button>
              ))}
            </div>
            <UnitList id="chosen" label="Units in this Set:" top="mt-11" />
          </div>
        </main>
        <div className="flex h-9 bg-[#1f307a] pt-[5px] pl-2">
          <button className={clsx(footerBtn, "w-[94px]")}><u>C</u>ancel</button>
          <button className={clsx(footerBtn, "ml-[738px] w-[118px]")}><u>S</u>ave &amp; Close</button>
        </div>
        <div className="h-[17px] bg-[#f6f6f6]" />
      </div>
    </div>

    <div className="flex h-[22px] items-center border-t border-[#567db1] bg-gradient-to-b from-[#dbe8fa] via-[#b4d0f5] to-[#dbe9fb] pl-2 text-[11px] text-[#15296b]">
      <span className="w-[950px]">Form View</span>
      <span className="h-full w-0.5 border-l border-[#8db0de] bg-white" />
      <span className="ml-auto pr-[10px]">Num Lock</span>
      <span className="mr-1 h-full w-px bg-[#8db0de]" />
      <button aria-label="Form view" className="flex h-5 w-[19px] items-center justify-center border border-[#c5923c] bg-[#fcd98f]">
        <Icon w={12} h={10}><path d="M.5.5h11v9H.5zM.5 2h11M3 4.500h3M3 7h3M7 4.500h3M7 7h3" fill="none" stroke="#555" /></Icon>
      </button>
      <button aria-label="Design view" className="flex h-5 w-[19px] items-center justify-center border border-[#a9c0e0] bg-[#d3e1f4]">
        <Icon w={12} h={11}><path d="M1 1v6h6zM5 6l6-6M0 9.500h12" fill="none" stroke="#666" strokeWidth="1.500" /></Icon>
      </button>
    </div>
    <Taskbar />
  </div>
);

export default App;
